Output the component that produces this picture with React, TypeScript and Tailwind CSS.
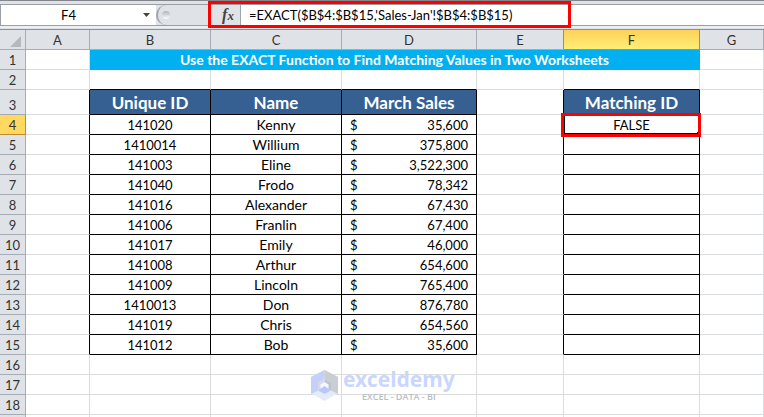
import type { ReactNode } from "react";

const columns = ["A", "B", "C", "D", "E", "F", "G"];

const sales = [
  { id: "141020", name: "Kenny", amount: 35600 },
  { id: "1410014", name: "Willium", amount: 375800 },
  { id: "141003", name: "Eline", amount: 3522300 },
  { id: "141040", name: "Frodo", amount: 78342 },
  { id: "141016", name: "Alexander", amount: 67430 },
  { id: "141006", name: "Franlin", amount: 67400 },
  { id: "141017", name: "Emily", amount: 46000 },
  { id: "141008", name: "Arthur", amount: 654600 },
  { id: "141009", name: "Lincoln", amount: 765400 },
  { id: "1410013", name: "Don", amount: 876780 },
  { id: "141019", name: "Chris", amount: 654560 },
  { id: "141012", name: "Bob", amount: 35600 },
];

const grid = "border-r border-b border-[#dadcdd]";
const boxed = "border-r border-b border-black";
const beforeBox = "border-r border-b border-b-[#dadcdd] border-r-black";
const aboveBox = "border-r border-b border-r-[#dadcdd] border-b-black";
const tableHead = `${boxed} bg-[#366092] pt-px text-[17px] leading-[23px] font-bold text-white`;

function SheetRow({
  row,
  active,
  children,
}: {
  row?: number;
  active?: boolean;
  children: ReactNode;
}) {
  return (
    <tr className={row === 3 ? "h-[25px]" : "h-5"}>
      <th
        scope="row"
        className={`border-r border-b align-bottom font-normal text-[#333] ${
          active
            ? "border-[#c28a30] bg-[#ffd860]"
            : "border-[#a5acb5] bg-[#dfe3e8]"
        }`}
      >
        {row}
      </th>
      {children}
    </tr>
  );
}

function FormulaBar() {
  return (
    <div className="flex h-[30px] flex-col border-t border-b border-t-[#85868b] border-b-[#8b9097] bg-[#dfe2e7]">
      <div className="mt-[3px] flex h-[22px] border-y border-[#9a9ea6]">
        <div className="flex w-[156px] items-center border-l border-[#9a9ea6] bg-white">
          <input
            aria-label="Name box"
            defaultValue="F4"
            className="w-0 flex-1 text-center text-[13px] leading-5 outline-none"
          />
          <button aria-label="Show names" className="flex w-5 justify-center">
            <svg width="7" height="4" viewBox="0 0 7 4">
              <path d="M0 0h7L3.5 4z" fill="#444" />
            </svg>
          </button>
        </div>
        <div className="flex w-[52px] items-center rounded-l-full border-l-2 border-[#a0a4ab] pl-1">
          <span className="size-2 rounded-full bg-linear-to-b from-[#aeb3ba] to-white" />
        </div>
        <div className="relative flex w-[363px] items-center">
          <button
            aria-label="Insert function"
            className="flex h-5 w-[33px] items-center justify-center border-r border-[#a0a4ab] pl-2"
          >
            <span className="font-['Liberation_Serif',serif] text-base leading-5 font-bold text-[#444] italic">
              f<span className="text-[13px]">x</span>
            </span>
          </button>
          <input
            aria-label="Formula"
            defaultValue="=EXACT($B$4:$B$15,'Sales-Jan'!$B$4:$B$15)"
            className="h-5 w-0 flex-1 bg-white pl-2 text-[13px] leading-5 outline-none"
          />
          <div className="pointer-events-none absolute inset-x-0 -top-1 h-[27px] border-3 border-[#fe0000]" />
        </div>
        <div className="flex-1 bg-white" />
      </div>
      <div className="h-0.5 bg-[#edeff4]" />
    </div>
  );
}

function Watermark() {
  return (
    <div className="pointer-events-none absolute top-[369px] left-[310px] flex gap-1">
      <svg width="29" height="33" viewBox="0 0 29 33">
        <path d="M14.5 1 28 8v16l-13.5 8L1 24V8z" fill="#e3ebf6" />
        <path d="M14.5 1v9L8 13.5v8L1 25V8z" fill="#c3d0fb" />
        <path d="M14.5 1 28 8v17l-7-3.5v-8L14.5 10z" fill="#c9ced5" />
        <path d="M14.5 10 21 13.5v8l-6.5-4.5z" fill="#bfc4ca" />
        <path d="M14.5 10 8 13.5v8l6.5-4.5z" fill="#d5dbe6" />
        <path d="M14.5 13l4 2.500v4l-4 2.500-4-2.500v-4z" fill="#f4f7fd" />
        <path d="M14.5 17 21 21.5l-6.500 3.500L8 21.500z" fill="#b9c8fb" />
      </svg>
      <div className="flex flex-col items-center">
        <span className="font-['Noto_Sans',sans-serif] text-[21px] leading-5 font-bold text-[#cad6fd]">
          exceldemy
        </span>
        <span className="mt-1 font-['Open_Sans',sans-serif] text-[9px] leading-2 font-semibold text-[#b9bec5]">
          EXCEL - DATA - BI
        </span>
      </div>
    </div>
  );
}

function EmptyCells() {
  return columns.map((column) => <td key={column} className={grid} />);
}

export default function App() {
  return (
    <div className="relative h-screen overflow-hidden bg-white font-['Lato','Open_Sans',sans-serif] text-black">
      <FormulaBar />
      <table className="w-full table-fixed border-separate border-spacing-0 text-center text-[13px] leading-[18px]">
        <colgroup>
          <col className="w-[26px]" />
          <col className="w-16" />
          <col className="w-[121px]" />
          <col className="w-[131px]" />
          <col className="w-[135px]" />
          <col className="w-[87px]" />
          <col className="w-[136px]" />
          <col />
        </colgroup>
        <thead>
          <tr className="h-5">
            <td className="border-r border-b border-[#a5acb5] bg-[#dfe3e8]">
              <svg width="11" height="11" viewBox="0 0 11 11" className="mt-1 ml-[10px]">
                <path d="M11 0v11H0z" fill="#b5b9be" />
              </svg>
            </td>
            {columns.map((column) => (
              <th
                key={column}
                scope="col"
                className={`border-r border-b pt-px leading-[18px] font-normal text-[#333] ${
                  column === "F"
                    ? "border-[#c28a30] bg-linear-to-b from-[#fdd15a] to-[#ffee74]"
                    : column === "E"
                      ? "border-r-[#c28a30] border-b-[#a5acb5] bg-[#dfe3e8]"
                      : "border-[#a5acb5] bg-[#dfe3e8]"
                }`}
              >
                {column}
              </th>
            ))}
          </tr>
        </thead>
        <tbody>
          <SheetRow row={1}>
            <td className={grid} />
            <th
              colSpan={5}
              className="border-r border-b border-[#00b0f0] bg-[#00b0f0] pt-px text-sm leading-[18px] font-bold text-white"
            >
              Use the EXACT Function to Find Matching Values in Two Worksheets
            </th>
            <td className={grid} />
          </SheetRow>
          <SheetRow row={2}>
            <td className={grid} />
            <td className={aboveBox} />
            <td className={aboveBox} />
            <td className={aboveBox} />
            <td className={grid} />
            <td className={aboveBox} />
            <td className={grid} />
          </SheetRow>
          <SheetRow row={3}>
            <td className={beforeBox} />
            <th className={tableHead}>Unique ID</th>
            <th className={tableHead}>Name</th>
            <th className={tableHead}>March Sales</th>
            <td className={beforeBox} />
            <th className={tableHead}>Matching ID</th>
            <td className={grid} />
          </SheetRow>
          {sales.map((sale, index) => (
            <SheetRow key={sale.id} row={index + 4} active={index === 0}>
              <td className={beforeBox} />
              <td className={boxed}>{sale.id}</td>
              <td className={`${boxed} text-sm leading-[18px]`}>{sale.name}</td>
              <td className={boxed}>
                <div className="flex justify-between px-2">
                  <span>$</span>
                  <span>{sale.amount.toLocaleString("en-US")}</span>
                </div>
              </td>
              <td className={beforeBox} />
              <td className={`${boxed} relative`}>
                {index === 0 && (
                  <>
                    FALSE
                    <span className="absolute inset-0 border-b border-l border-black" />
                    <span className="absolute -right-0.5 -bottom-0.5 size-1 bg-black" />
                    <span className="absolute -top-0.5 -right-0.5 -bottom-[3px] -left-[3px] border-3 border-[#fe0000]" />
                  </>
                )}
              </td>
              <td className={grid} />
            </SheetRow>
          ))}
          <SheetRow row={16}>
            <EmptyCells />
          </SheetRow>
          <SheetRow row={17}>
            <EmptyCells />
          </SheetRow>
          <SheetRow row={18}>
            <EmptyCells />
          </SheetRow>
          <SheetRow>
            <EmptyCells />
          </SheetRow>
        </tbody>
      </table>
      <Watermark />
    </div>
  );
}
